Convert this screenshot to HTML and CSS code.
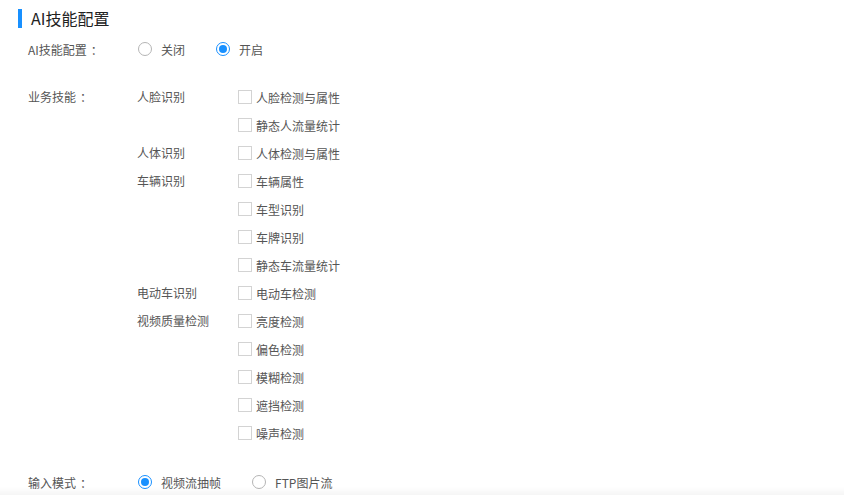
FILE: index.html
```html
<!DOCTYPE html>
<html lang="zh-CN">
<head>
    <meta charset="UTF-8">
    <title>AI技能配置</title>
    <link rel="stylesheet" href="styles.css">
</head>
<body>
    <div class="page">
        <h2 class="title">AI技能配置</h2>

        <div class="form-row">
            <div class="form-label">AI技能配置<span class="colon">：</span></div>
            <label class="radio"><span class="radio-dot"></span>关闭</label>
            <label class="radio"><span class="radio-dot checked"></span>开启</label>
        </div>

        <div class="form-row skills">
            <div class="form-label">业务技能<span class="colon">：</span></div>
            <div class="skill-list">
                <div class="skill-group">
                    <div class="group-name">人脸识别</div>
                    <div class="group-items">
                        <label class="check"><span class="box"></span>人脸检测与属性</label>
                        <label class="check"><span class="box"></span>静态人流量统计</label>
                    </div>
                </div>
                <div class="skill-group">
                    <div class="group-name">人体识别</div>
                    <div class="group-items">
                        <label class="check"><span class="box"></span>人体检测与属性</label>
                    </div>
                </div>
                <div class="skill-group">
                    <div class="group-name">车辆识别</div>
                    <div class="group-items">
                        <label class="check"><span class="box"></span>车辆属性</label>
                        <label class="check"><span class="box"></span>车型识别</label>
                        <label class="check"><span class="box"></span>车牌识别</label>
                        <label class="check"><span class="box"></span>静态车流量统计</label>
                    </div>
                </div>
                <div class="skill-group">
                    <div class="group-name">电动车识别</div>
                    <div class="group-items">
                        <label class="check"><span class="box"></span>电动车检测</label>
                    </div>
                </div>
                <div class="skill-group">
                    <div class="group-name">视频质量检测</div>
                    <div class="group-items">
                        <label class="check"><span class="box"></span>亮度检测</label>
                        <label class="check"><span class="box"></span>偏色检测</label>
                        <label class="check"><span class="box"></span>模糊检测</label>
                        <label class="check"><span class="box"></span>遮挡检测</label>
                        <label class="check"><span class="box"></span>噪声检测</label>
                    </div>
                </div>
            </div>
        </div>

        <div class="form-row mode">
            <div class="form-label">输入模式<span class="colon">：</span></div>
            <label class="radio"><span class="radio-dot checked"></span>视频流抽帧</label>
            <label class="radio"><span class="radio-dot"></span>FTP图片流</label>
        </div>
    </div>
    <div class="bottom-shade"></div>
</body>
</html>
```

FILE: styles.css
```css
body {
    margin: 0;
    background-color: #fff;
    font-family: "Microsoft YaHei", "Noto Sans CJK SC", sans-serif;
    font-size: 12px;
    color: #555;
}
.page {
    padding-top: 9px;
}
.title {
    margin: 0 0 7px 18px;
    height: 19px;
    line-height: 19px;
    padding-left: 9px;
    border-left: 4px solid #1890ff;
    font-size: 16px;
    font-weight: normal;
    color: #222;
}
.form-row {
    display: flex;
    align-items: center;
    height: 28px;
    padding-left: 28px;
}
.form-label {
    width: 109px;
    flex-shrink: 0;
}
.colon {
    margin-left: 4px;
}
.radio {
    display: flex;
    align-items: center;
    margin-right: 30px;
}
.radio-dot {
    box-sizing: border-box;
    width: 14px;
    height: 14px;
    margin-left: 1px;
    margin-right: 9px;
    border: 1px solid #b5b5b5;
    border-radius: 50%;
    position: relative;
}
.radio-dot.checked {
    border-color: #1890ff;
}
.radio-dot.checked::after {
    content: "";
    position: absolute;
    left: 2px;
    top: 2px;
    width: 8px;
    height: 8px;
    border-radius: 50%;
    background-color: #1890ff;
}
.skills {
    height: auto;
    align-items: flex-start;
    margin-top: 20px;
}
.skills .form-label {
    line-height: 28px;
}
.skill-group {
    display: flex;
}
.group-name {
    width: 101px;
    line-height: 28px;
}
.check {
    display: flex;
    align-items: center;
    height: 28px;
}
.box {
    box-sizing: border-box;
    width: 14px;
    height: 14px;
    margin-right: 4px;
    border: 1px solid #d3d3d3;
}
.mode {
    margin-top: 21px;
}
.bottom-shade {
    position: fixed;
    left: 0;
    right: 0;
    bottom: 0;
    height: 8px;
    background: linear-gradient(rgba(0, 0, 0, 0), rgba(0, 0, 0, 0.04));
}
```
